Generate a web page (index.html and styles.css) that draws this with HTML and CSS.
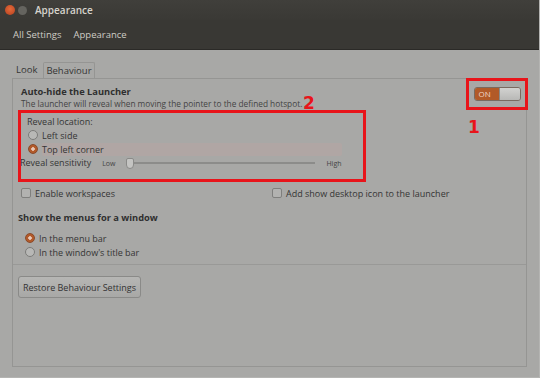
FILE: index.html
```html
<!DOCTYPE html>
<html lang="en">
<head>
    <meta charset="UTF-8">
    <title>Appearance</title>
    <link rel="stylesheet" href="styles.css">
</head>
<body>
    <div class="window">
        <div class="titlebar">
            <span class="btn-close"></span>
            <span class="btn-min"></span>
            <span class="win-title">Appearance</span>
        </div>
        <div class="toolbar">
            <span>All Settings</span>
            <span>Appearance</span>
        </div>
        <div class="content">
            <div class="tabs">
                <div class="tab">Look</div>
                <div class="tab active">Behaviour</div>
            </div>
            <div class="frame">
                <div class="header-row">
                    <div class="header-text">
                        <div class="heading">Auto-hide the Launcher</div>
                        <div class="desc">The launcher will reveal when moving the pointer to the defined hotspot.</div>
                    </div>
                    <div class="mark mark-1">
                        <div class="switch"><span class="switch-on">ON</span><span class="switch-knob"></span></div>
                        <span class="mark-num num-1">1</span>
                    </div>
                </div>
                <div class="mark mark-2">
                    <span class="mark-num num-2">2</span>
                    <div class="label">Reveal location:</div>
                    <div class="radio-row"><span class="radio"></span><span>Left side</span></div>
                    <div class="radio-row"><span class="radio checked"></span><span class="selected-text">Top left corner</span></div>
                    <div class="slider-row">
                        <span class="label">Reveal sensitivity</span>
                        <span class="small">Low</span>
                        <div class="track"><span class="knob"></span></div>
                        <span class="small">High</span>
                    </div>
                </div>
                <div class="check-row">
                    <div class="check-item"><span class="checkbox"></span>Enable workspaces</div>
                    <div class="check-item second"><span class="checkbox"></span>Add show desktop icon to the launcher</div>
                </div>
                <div class="heading menus-heading">Show the menus for a window</div>
                <div class="menu-options">
                    <div class="radio-row"><span class="radio checked"></span>In the menu bar</div>
                    <div class="radio-row"><span class="radio"></span>In the window's title bar</div>
                </div>
                <div class="separator"></div>
                <button class="restore">Restore Behaviour Settings</button>
            </div>
        </div>
    </div>
</body>
</html>
```

FILE: styles.css
```css
body {
    margin: 0;
    padding: 0;
    font-family: "Open Sans", "DejaVu Sans", sans-serif;
    background-color: #a8a8a6;
    color: #353535;
}
.window {
    width: 539px;
    height: 377px;
    overflow: hidden;
    border-right: 1px solid #b4b4b2;
    border-bottom: 1px solid #b4b4b2;
}
.titlebar {
    height: 20px;
    display: flex;
    align-items: center;
    padding: 0 0 0 5px;
    background: linear-gradient(#403f3b, #3a3935);
}
.btn-close {
    width: 10px;
    height: 10px;
    border-radius: 50%;
    background: radial-gradient(circle at 50% 40%, #e66a3a, #b4401e);
}
.btn-min {
    width: 9px;
    height: 9px;
    margin-left: 3px;
    border-radius: 50%;
    background: #65645f;
}
.win-title {
    margin-left: 8px;
    font-size: 10px;
    font-weight: 600;
    color: #d6d3cc;
}
.toolbar {
    height: 29px;
    display: flex;
    align-items: center;
    gap: 12px;
    padding: 0 0 0 13px;
    background: #393834;
    border-bottom: 1px solid #2b2a27;
    font-size: 9.5px;
    color: #cfccc5;
}
.content {
    padding: 12px 12px 0 12px;
}
.tabs {
    display: flex;
    align-items: flex-end;
    height: 16px;
    font-size: 9.5px;
}
.tab {
    padding: 0 4px;
    line-height: 16px;
}
.tab.active {
    margin-left: 2px;
    border: 1px solid #959593;
    border-bottom: none;
    border-radius: 2px 2px 0 0;
    padding: 0 2px 0 2px;
    background: #a8a8a6;
    position: relative;
    top: 1px;
}
.frame {
    height: 287px;
    border: 1px solid #959593;
    padding: 0 0 0 8px;
    position: relative;
}
.header-row {
    display: flex;
    justify-content: space-between;
    align-items: flex-start;
}
.header-text {
    padding-top: 7px;
}
.heading {
    font-size: 9.3px;
    font-weight: 700;
    line-height: 12px;
    color: #2f2f2f;
}
.desc {
    font-size: 8.3px;
    line-height: 11px;
    color: #444;
}
.mark {
    border: 3px solid #e8141a;
    position: relative;
}
.mark-1 {
    width: 56px;
    height: 26px;
    margin: -1px -2px 0 0;
    display: flex;
    align-items: center;
    justify-content: center;
}
.mark-num {
    position: absolute;
    color: #e8141a;
    font-family: "DejaVu Sans", sans-serif;
    font-weight: 700;
    font-size: 17px;
}
.num-1 {
    left: -1px;
    top: 36px;
}
.num-2 {
    left: 282px;
    top: -20px;
}
.switch {
    width: 45px;
    height: 12px;
    display: flex;
    border: 1px solid #7a6a60;
    border-radius: 3px;
    overflow: hidden;
}
.switch-on {
    width: 20px;
    background: #b25a28;
    color: #f0d8c8;
    font-size: 8px;
    line-height: 12px;
    padding-left: 4px;
}
.switch-knob {
    flex: 1;
    background: linear-gradient(#d2d2d0, #b8b8b6);
    border-left: 1px solid #8a8a88;
}
.mark-2 {
    width: 342px;
    height: 66px;
    margin: 0 0 0 -3px;
    font-size: 9px;
}
.label {
    font-size: 9px;
    padding: 3px 0 0 6px;
    line-height: 12px;
}
.radio-row {
    display: flex;
    align-items: center;
    height: 14px;
    font-size: 9px;
}
.mark-2 .radio-row {
    padding-left: 7px;
}
.selected-text {
    width: 300px;
    line-height: 13px;
    background: #b0a6a4;
    border-radius: 2px;
}
.radio {
    width: 8px;
    height: 8px;
    border-radius: 50%;
    border: 1px solid #7c7c7a;
    background: #b8b8b6;
    margin-right: 4px;
}
.radio.checked {
    border-color: #8a4a2a;
    background: radial-gradient(circle, #e8c8b8 0 1.5px, #b25a2a 2px);
}
.slider-row {
    display: flex;
    align-items: center;
    height: 14px;
}
.slider-row .label {
    padding: 0;
    margin-left: -1px;
}
.small {
    font-size: 7px;
    color: #444;
    margin-left: 11px;
}
.track {
    width: 186px;
    height: 2px;
    background: #8c8c8a;
    margin-left: 14px;
    position: relative;
}
.knob {
    position: absolute;
    left: -3px;
    top: -4px;
    width: 6px;
    height: 9px;
    border: 1px solid #8a8a88;
    border-radius: 2px 2px 4px 4px;
    background: #c4c4c2;
}
.check-row {
    display: flex;
    margin-top: 5px;
    font-size: 9px;
}
.check-item {
    display: flex;
    align-items: center;
    height: 12px;
}
.check-item.second {
    margin-left: 157px;
}
.checkbox {
    width: 8px;
    height: 8px;
    border: 1px solid #7f7f7d;
    border-radius: 2px;
    background: #b2b2b0;
    margin-right: 4px;
}
.menus-heading {
    margin: 13px 0 0 -3px;
}
.menu-options {
    margin-top: 7px;
    padding-left: 4px;
}
.separator {
    height: 1px;
    background: #999997;
    margin: 5px 0 0 -8px;
}
.restore {
    margin: 11px 0 0 -3px;
    width: 123px;
    height: 22px;
    padding: 0;
    font-family: "Open Sans", "DejaVu Sans", sans-serif;
    font-size: 9px;
    color: #333;
    background: linear-gradient(#b6b6b4, #a8a8a6);
    border: 1px solid #8a8a88;
    border-radius: 3px;
}
```
